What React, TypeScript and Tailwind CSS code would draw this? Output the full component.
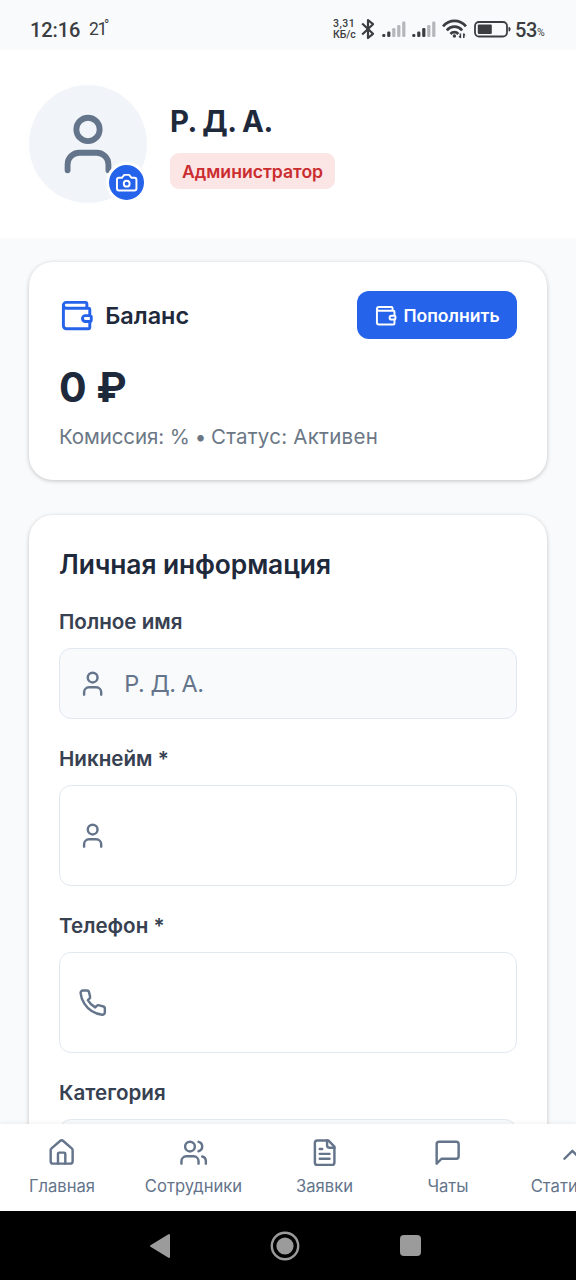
import type { ReactNode } from "react";

type IconProps = { className?: string; children: ReactNode };

function Icon({ className, children }: IconProps) {
  return (
    <svg viewBox="0 0 24 24" fill="none" stroke="currentColor" strokeWidth="2" strokeLinecap="round" strokeLinejoin="round" className={className}>
      {children}
    </svg>
  );
}

const user = (
  <>
    <path d="M19 21v-2a4 4 0 0 0-4-4H9a4 4 0 0 0-4 4v2" />
    <circle cx="12" cy="7" r="4" />
  </>
);
const camera = (
  <>
    <path d="M14.5 4h-5L7 7H4a2 2 0 0 0-2 2v9a2 2 0 0 0 2 2h16a2 2 0 0 0 2-2V9a2 2 0 0 0-2-2h-3l-2.5-3z" />
    <circle cx="12" cy="13" r="3" />
  </>
);
const wallet = (
  <>
    <path d="M19 7V4a1 1 0 0 0-1-1H5a2 2 0 0 0 0 4h15a1 1 0 0 1 1 1v4h-3a2 2 0 0 0 0 4h3a1 1 0 0 0 1-1v-2a1 1 0 0 0-1-1" />
    <path d="M3 5v14a2 2 0 0 0 2 2h15a1 1 0 0 0 1-1v-4" />
  </>
);
const phone = (
  <path d="M22 16.92v3a2 2 0 0 1-2.18 2 19.79 19.79 0 0 1-8.63-3.07 19.5 19.5 0 0 1-6-6 19.79 19.79 0 0 1-3.07-8.67A2 2 0 0 1 4.11 2h3a2 2 0 0 1 2 1.72 12.84 12.84 0 0 0 .7 2.81 2 2 0 0 1-.45 2.11L8.09 9.91a16 16 0 0 0 6 6l1.27-1.27a2 2 0 0 1 2.11-.45 12.84 12.84 0 0 0 2.81.7A2 2 0 0 1 22 16.92z" />
);
const house = (
  <>
    <path d="M15 21v-8a1 1 0 0 0-1-1h-4a1 1 0 0 0-1 1v8" />
    <path d="M3 10a2 2 0 0 1 .709-1.528l7-5.999a2 2 0 0 1 2.582 0l7 5.999A2 2 0 0 1 21 10v9a2 2 0 0 1-2 2H5a2 2 0 0 1-2-2z" />
  </>
);
const users = (
  <>
    <path d="M16 21v-2a4 4 0 0 0-4-4H6a4 4 0 0 0-4 4v2" />
    <circle cx="9" cy="7" r="4" />
    <path d="M22 21v-2a4 4 0 0 0-3-3.87" />
    <path d="M16 3.13a4 4 0 0 1 0 7.75" />
  </>
);
const file = (
  <>
    <path d="M15 2H6a2 2 0 0 0-2 2v16a2 2 0 0 0 2 2h12a2 2 0 0 0 2-2V7Z" />
    <path d="M14 2v4a2 2 0 0 0 2 2h4" />
    <path d="M10 9H8" />
    <path d="M16 13H8" />
    <path d="M16 17H8" />
  </>
);
const message = <path d="M21 15a2 2 0 0 1-2 2H7l-4 4V5a2 2 0 0 1 2-2h14a2 2 0 0 1 2 2z" />;
const trend = (
  <>
    <path d="m22 7-8.5 8.5-5-5L2 17" />
    <path d="M16 7h6v6" />
  </>
);

function Signal({ active }: { active: number }) {
  return (
    <svg viewBox="0 0 24 16" className="h-4 w-6">
      {[3, 5.5, 9, 12, 15.5].map((h, i) => (
        <rect key={h} x={0.2 + i * 5} y={16 - h} width="3.2" height={h} rx="1.2" fill={i < active ? "#3b3d40" : "#b4b6b9"} />
      ))}
    </svg>
  );
}

function StatusBar() {
  return (
    <div className="flex h-[50px] shrink-0 items-start bg-[#f8fafc] pl-[30px] font-['Roboto',sans-serif] text-[#3b3d40]">
      <span className="mt-[17px] w-[59px] text-[20px] leading-[26px] font-medium tracking-[-0.1px] whitespace-nowrap">12:16</span>
      <span className="mt-[16px] w-[15px] text-[17.5px] leading-[26px] tracking-[-1.4px]">21</span>
      <span className="mt-[18px] w-[229px] text-[14px] leading-[14px]">°</span>
      <span className="mt-[18px] flex w-[28px] flex-col text-[10.5px] leading-[11px] font-medium whitespace-nowrap">
        <span className="tracking-[0.5px]">3,31</span>
        <span className="tracking-[-0.1px]">КБ/с</span>
      </span>
      <svg viewBox="0 0 14 22" className="mt-[18px] mr-[7px] h-[22px] w-[14px]" fill="none" stroke="currentColor" strokeWidth="2.2" strokeLinejoin="round">
        <path d="M1.2 5.5 12 15.8 7 20V2l5 4.2L1.2 16.5" />
      </svg>
      <span className="mt-[21px] mr-[6px]"><Signal active={2} /></span>
      <span className="mt-[21px] mr-[6px]"><Signal active={3} /></span>
      <svg viewBox="0 0 25 20" className="mt-[19px] mr-[7px] h-5 w-[25px]" fill="none" stroke="currentColor" strokeWidth="2.7">
        <path d="M1 7.3C7.5.1 17.5.1 24 7.3" />
        <path d="M4.8 11.3c4.3-4.8 11-4.8 15.4 0" />
        <path d="M8.5 15c2.2-2.5 5.6-2.5 7.8 0" />
        <circle cx="12.4" cy="17" r="1.7" fill="currentColor" stroke="none" />
        <path d="M18.4 19v-4.6M21.8 14.4V19" strokeWidth="1.5" />
        <path d="m16.4 17 2 2.4v-2.4zM23.6 16.6l-1.8-2.4v2.4z" fill="currentColor" stroke="none" />
      </svg>
      <svg viewBox="0 0 37 17" className="mt-[21px] mr-[4px] h-[17px] w-[37px]">
        <rect x="1" y="1" width="32" height="14.5" rx="4" fill="none" stroke="currentColor" strokeWidth="1.8" />
        <rect x="3.8" y="3.5" width="14" height="9.5" rx="1" fill="currentColor" />
        <path d="M35 6.2c1.5.4 1.5 3.6 0 4z" fill="currentColor" stroke="currentColor" />
      </svg>
      <span className="mt-[17px] text-[20px] leading-[26px] font-medium tracking-[-0.4px]">53</span>
      <span className="mt-[25px] text-[10.5px] leading-[15px]">%</span>
    </div>
  );
}

function Field({ label, icon, value, className }: { label: string; icon?: ReactNode; value?: string; className: string }) {
  return (
    <div className="mb-[27px]">
      <div className="mb-[13px] h-[26px] text-[20.6px] leading-[26px] font-semibold text-[#374151]">{label}</div>
      <div className={`flex items-center rounded-[12px] border-[1.5px] border-[#e2e8f0] pl-[18px] ${className}`}>
        {icon && <Icon className="size-[29.3px] text-[#64748b]">{icon}</Icon>}
        {value && <span className="ml-[17px] text-[23.5px] leading-[30px] tracking-[-0.5px] text-[#64748b]">{value}</span>}
      </div>
    </div>
  );
}

const tabs = [
  { label: "Главная", icon: house, width: "w-[124px]" },
  { label: "Сотрудники", icon: users, width: "w-[139px]" },
  { label: "Заявки", icon: file, width: "w-[123px]" },
  { label: "Чаты", icon: message, width: "w-[124px]" },
  { label: "Статистика", icon: trend, width: "w-[134px]" },
];

export default function App() {
  return (
    <div className="flex h-[1280px] w-[576px] flex-col overflow-hidden bg-[#f8fafc] font-['Inter',sans-serif] text-[#1e293b]">
      <StatusBar />
      <header className="flex h-[188px] shrink-0 bg-white pt-[35px] pl-[29px]">
        <div className="relative flex size-[118px] items-center justify-center rounded-full bg-[#f1f5f9] text-[#64748b]">
          <Icon className="size-[70px]">{user}</Icon>
          <div className="absolute right-0 bottom-0 flex size-[41px] items-center justify-center rounded-full border-[3px] border-white bg-[#2563eb] text-white">
            <Icon className="size-[23.4px]">{camera}</Icon>
          </div>
        </div>
        <div className="ml-[23px] flex flex-col items-start pt-[18px]">
          <h1 className="h-[37px] text-[29.3px] leading-[38px] font-bold tracking-[-0.5px]">Р. Д. А.</h1>
          <span className="mt-[13px] h-[36px] rounded-[9px] bg-[#fbe5e5] px-[12px] text-[17.6px] leading-[37px] font-semibold text-[#cb2c2f]">Администратор</span>
        </div>
      </header>
      <main className="flex min-h-0 flex-1 flex-col overflow-hidden px-[29px] pt-[23.5px]">
        <section className="mb-[35px] h-[218.5px] shrink-0 rounded-[24px] bg-white px-[30px] pt-[29.5px] shadow-[0_1px_4px_rgba(0,0,0,0.22)]">
          <div className="flex h-[48px] items-center">
            <Icon className="mt-[1px] size-[35.2px] text-[#2563eb]">{wallet}</Icon>
            <h2 className="ml-[11px] pt-[1px] text-[23.4px] leading-[30px] font-semibold">Баланс</h2>
            <button className="ml-auto flex h-[48px] w-[160px] items-center rounded-[12px] bg-[#2563eb] pl-[17px] text-white">
              <Icon className="mt-[1px] size-[23.4px]">{wallet}</Icon>
              <span className="ml-[6px] pt-[2px] text-[17.6px] font-semibold">Пополнить</span>
            </button>
          </div>
          <div className="mt-[21px] h-[54px] text-[41px] leading-[54px] font-bold">0 ₽</div>
          <div className="mt-[9px] text-[20.5px] leading-[28px] whitespace-pre text-[#6b7785]">
            <span className="tracking-[-0.1px]">Комиссия: </span>
            <span className="tracking-[-0.5px]">% • </span>
            <span className="tracking-[0.25px]">Статус: Активен</span>
          </div>
        </section>
        <section className="h-[700px] shrink-0 rounded-[24px] bg-white px-[30px] pt-[32px] shadow-[0_1px_4px_rgba(0,0,0,0.22)]">
          <h2 className="mb-[28px] h-[34px] text-[26.4px] leading-[34px] font-semibold tracking-[-0.1px]">Личная информация</h2>
          <Field label="Полное имя" icon={user} value="Р. Д. А." className="h-[71px] bg-[#f8fafc]" />
          <Field label="Никнейм *" icon={user} className="h-[101px]" />
          <Field label="Телефон *" icon={phone} className="h-[101px]" />
          <Field label="Категория" className="h-[71px] bg-[#f8fafc]" />
        </section>
      </main>
      <nav className="z-10 flex h-[87px] shrink-0 bg-white shadow-[0_-1px_4px_rgba(0,0,0,0.06)]">
        {tabs.map((t) => (
          <div key={t.label} className={`flex shrink-0 flex-col items-center pt-[14px] text-[#64748b] ${t.width}`}>
            <Icon className="size-[29.3px]">{t.icon}</Icon>
            <span className="mt-[7px] text-[16.6px] leading-[24px]">{t.label}</span>
          </div>
        ))}
      </nav>
      <div className="flex h-[69px] shrink-0 items-center bg-black pl-[149px] text-[#9b9b9b]">
        <svg viewBox="0 0 22 26" className="h-[26px] w-[22px]">
          <path d="M20 2v22L2 13z" fill="currentColor" stroke="currentColor" strokeWidth="2" strokeLinejoin="round" />
        </svg>
        <svg viewBox="0 0 30 30" className="ml-[99px] size-[30px]">
          <circle cx="15" cy="15" r="13.2" fill="none" stroke="currentColor" strokeWidth="2.4" />
          <circle cx="15" cy="15" r="8.6" fill="currentColor" />
        </svg>
        <div className="ml-[100px] size-[21px] rounded-[4px] bg-[#9b9b9b]" />
      </div>
    </div>
  );
}
